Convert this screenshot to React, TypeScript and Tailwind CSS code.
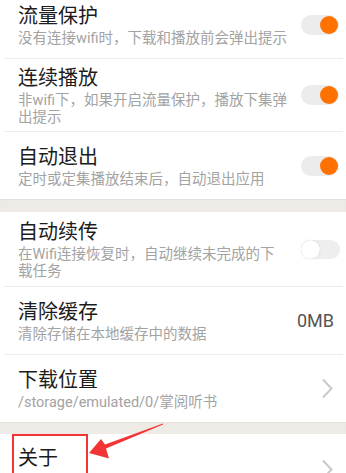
import React from 'react';

const font = { fontFamily: 'Roboto, "Noto Sans CJK SC", sans-serif' };

const Toggle: React.FC<{ on?: boolean }> = ({ on }) =>
  on ? (
    <div className="relative h-[20px] w-[38px] shrink-0 rounded-full bg-[#ececec]">
      <div className="absolute right-[1px] top-[1px] h-[18px] w-[18px] rounded-full bg-[#ff7200]" />
    </div>
  ) : (
    <div className="relative h-[19px] w-[39px] shrink-0 rounded-full bg-[#eeeeee]">
      <div className="absolute left-[0px] top-[0px] h-[19px] w-[19px] rounded-full bg-white shadow-[0_0_1px_rgba(0,0,0,0.25)]" />
    </div>
  );

const Chevron: React.FC = () => (
  <svg width="13" height="21" viewBox="0 0 13 21" className="shrink-0">
    <path d="M2 1.5 L10.5 10.5 L2 19.5" fill="none" stroke="#c9c9c9" strokeWidth="2" />
  </svg>
);

const Row: React.FC<{
  title: string;
  sub?: string[];
  right?: React.ReactNode;
  className?: string;
}> = ({ title, sub, right, className }) => (
  <div className={`flex items-center justify-between pl-[18px] pr-[5px] ${className ?? ''}`}>
    <div className="flex flex-col">
      <div className="text-[20px] leading-[26px] text-[#1c1c1c]">{title}</div>
      {sub && (
        <div className="mt-[1px] text-[14.5px] leading-[17px] text-[#a3a3a3] whitespace-nowrap">
          {sub.map((l, i) => (
            <div key={i}>{l}</div>
          ))}
        </div>
      )}
    </div>
    <div className="flex w-[40px] justify-start">{right}</div>
  </div>
);

const Divider = () => <div className="ml-[4px] mr-[3px] h-px bg-[#efebe7]" />;
const Band = ({ h }: { h: string }) => (
  <div className={`${h} bg-[#eeeae6] shadow-[inset_0_1px_1px_rgba(0,0,0,0.04)]`} />
);

export default function App() {
  return (
    <div className="relative h-[473px] w-[346px] overflow-hidden bg-white" style={font}>
      <div className="-mt-[9px]">
        <Row
          className="h-[67px]"
          title="流量保护"
          sub={['没有连接wifi时，下载和播放前会弹出提示']}
          right={<Toggle on />}
        />
        <Divider />
        <Row
          className="h-[72px]"
          title="连续播放"
          sub={['非wifi下，如果开启流量保护，播放下集弹', '出提示']}
          right={<Toggle on />}
        />
        <Divider />
        <Row
          className="h-[67px] pt-[1px]"
          title="自动退出"
          sub={['定时或定集播放结束后，自动退出应用']}
          right={<Toggle on />}
        />
        <Band h="h-[13px]" />
        <Row
          className="h-[74px]"
          title="自动续传"
          sub={['在Wifi连接恢复时，自动继续未完成的下', '载任务']}
          right={<Toggle />}
        />
        <Divider />
        <Row
          className="h-[67px]"
          title="清除缓存"
          sub={['清除存储在本地缓存中的数据']}
          right={<span className="-ml-[4px] text-[18px] text-[#555555]">0MB</span>}
        />
        <Divider />
        <Row
          className="h-[67px]"
          title="下载位置"
          sub={['/storage/emulated/0/掌阅听书']}
          right={<div className="pl-[20px]"><Chevron /></div>}
        />
        <Band h="h-[12px]" />
        <Row
          className="h-[67px] items-start pt-[11px]"
          title="关于"
          right={<div className="pl-[20px] pt-[14px]"><Chevron /></div>}
        />
      </div>

      {/* annotation overlay */}
      <div className="absolute left-[12px] top-[434px] h-[60px] w-[76px] border-2 border-[#f23434]" />
      <svg className="absolute left-0 top-0" width="346" height="473" viewBox="0 0 346 473">
        <polygon
          points="163,423.5 105,444.5 101,439 89,453 109,458.5 106,448.5 163,424.5"
          fill="#f23434"
        />
      </svg>
    </div>
  );
}
